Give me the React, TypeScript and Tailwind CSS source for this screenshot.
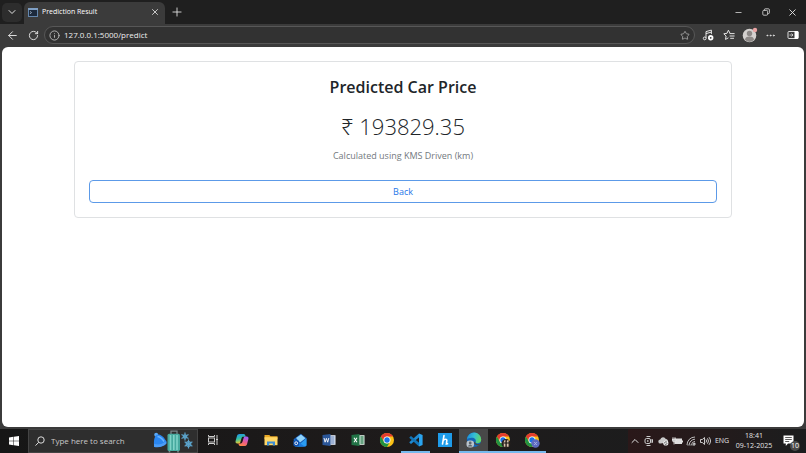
import type { ReactNode } from 'react';
import { ArrowLeft, ChevronDown, ChevronUp, Ellipsis, Info, Minus, Plus, RotateCw, Star, X } from 'lucide-react';

function RestoreIcon() {
  return (
    <svg viewBox="0 0 10 10" className="size-2" fill="none" stroke="currentColor">
      <rect x="1" y="3" width="6" height="6" rx="1.2" />
      <path d="M3 2.8V2a1 1 0 0 1 1-1h4a1.2 1.2 0 0 1 1.2 1.2V6a1 1 0 0 1-1 1h-.8" />
    </svg>
  );
}

function TabIcon() {
  return (
    <svg viewBox="0 0 10 9" className="h-[9px] w-2.5">
      <rect x="0.5" y="0.5" width="9" height="8" fill="#1d2a3c" stroke="#6487ad" />
      <path d="M0 0h10v2H0z" fill="#7f9fc4" />
      <path d="m2 3.4 1.5 1.2L2 5.8" stroke="#c5d8ec" strokeWidth="0.7" fill="none" />
    </svg>
  );
}

function MusicIcon() {
  return (
    <svg viewBox="0 0 12 12" className="size-3" fill="none" stroke="currentColor">
      <path d="M4 9.2V2.6l5.4-1.5v4M4 4.6l5.4-1.5" />
      <circle cx="2.7" cy="9.4" r="1.4" />
      <circle cx="8.7" cy="8.8" r="2.7" fill="#fff" stroke="none" />
      <circle cx="8.7" cy="8.8" r="0.9" fill="#3b3b3b" stroke="none" />
    </svg>
  );
}

function FavoritesIcon() {
  return (
    <svg viewBox="0 0 12 12" className="size-3" fill="none" stroke="currentColor" strokeLinecap="round" strokeLinejoin="round">
      <path d="M7 4.2 5.4 1.2 4 4.3l-3.2.5L3.1 7l-.6 3.4 2.6-1.4M7 4.6h4.2M7 7h4.2M7.6 9.3h3" />
    </svg>
  );
}

function Avatar() {
  return (
    <svg viewBox="0 0 16 16" className="size-4">
      <circle cx="7.5" cy="8.5" r="6.8" fill="#d3d0ce" />
      <circle cx="7.5" cy="6.5" r="2.7" fill="#8c8886" />
      <path d="M3 13.1c0-2.7 1.8-3.6 4.5-3.6s4.5.9 4.5 3.6a6.5 6.5 0 0 1-9 0z" fill="#8c8886" />
      <circle cx="13" cy="3" r="2.2" fill="#e9a3a3" />
    </svg>
  );
}

function SidebarIcon() {
  return (
    <svg viewBox="0 0 12 10" className="h-2.5 w-3">
      <rect x="1" y="1.5" width="10" height="7" rx="1" fill="none" stroke="#ddd" />
      <path d="M7.5 1h2.8A1.2 1.2 0 0 1 11.5 2.2v5.6A1.2 1.2 0 0 1 10.3 9H7.5z" fill="#fff" />
      <path d="M2.5 5H6M4.5 3.5 6 5 4.5 6.5" stroke="#ddd" strokeWidth="0.8" fill="none" />
    </svg>
  );
}

function WindowsIcon() {
  return (
    <svg viewBox="0 0 10 10" className="size-2.5" fill="#fff">
      <path d="M0 1.4 4.4.8v3.9H0zM4.900.7 10 0v4.700H4.900zM0 5.200h4.400v4L0 8.600zM4.900 5.200H10V10l-5.100-.7z" />
    </svg>
  );
}

function SearchIcon() {
  return (
    <svg viewBox="0 0 10 10" className="size-2.5" fill="none" stroke="#ddd">
      <circle cx="6" cy="4" r="3.2" />
      <path d="M3.7 6.3.5 9.6" />
    </svg>
  );
}

function SearchArt() {
  return (
    <svg viewBox="0 0 42 23" className="h-[23px] w-[42px]">
      <circle cx="3.2" cy="4.8" r="2" fill="#5aa8f5" />
      <path d="M1 15C.5 9 2 4.500 5.500 4.500c4 .5 6 4 8 7 .8 1.200-.5 2.500-2 3.500-3 2-7.500 2.300-10.500 2z" fill="#2a86f0" />
      <path d="M4.500 6.500c3 .5 5 2.500 6.500 5" stroke="#69b4ff" strokeWidth="1.500" fill="none" />
      <path d="M1 13.800c4 1.500 8 .7 11.300-2.300l1.200 2c-3 3.300-8 4.500-12.300 3.500z" fill="#4b9cf7" />
      <path d="M18 4V1.200h6V4" stroke="#7a8589" strokeWidth="1.300" fill="none" />
      <rect x="14.500" y="3.800" width="12.500" height="17.200" rx="1.600" fill="#46a99e" />
      <path d="M17.500 5v15M20.800 5v15M24 5v15" stroke="#7fd3c7" strokeWidth="1.600" />
      <path d="M16.500 21v1.500M25 21v1.500" stroke="#7a8589" strokeWidth="1.600" />
      <g stroke="#5ba3cb" strokeWidth="1.200" fill="none">
        <path d="M32 2.500v8M28.500 4.500l7 4M28.500 8.500l7-4" />
        <path d="M35.500 9.500v9M31.600 11.800l7.800 4.500M31.600 16.300l7.800-4.500" />
        <circle cx="35.500" cy="14" r="2.300" />
        <circle cx="32" cy="6.500" r="1.700" />
      </g>
    </svg>
  );
}

function TaskViewIcon() {
  return (
    <svg viewBox="0 0 12 12" className="size-3" fill="none" stroke="#ccc">
      <rect x="1.5" y="4" width="6" height="4" />
      <path d="M1.5 1v1.5h6V1M1.5 11V9.5h6V11M10 1v3M10 7v4" />
      <rect x="9.5" y="5" width="1" height="1" fill="#ddd" />
    </svg>
  );
}

function CopilotIcon() {
  return (
    <svg viewBox="0 0 14 14" className="size-3.5">
      <defs>
        <linearGradient id="copilotLeft" x1="0" y1="0" x2="0.3" y2="1">
          <stop offset="0" stopColor="#1f8df5" />
          <stop offset="0.55" stopColor="#35c2a0" />
          <stop offset="1" stopColor="#f2c62c" />
        </linearGradient>
        <linearGradient id="copilotRight" x1="0.6" y1="0" x2="0.2" y2="1">
          <stop offset="0" stopColor="#a45cf5" />
          <stop offset="0.5" stopColor="#ec5a8c" />
          <stop offset="1" stopColor="#ff8a3d" />
        </linearGradient>
      </defs>
      <path d="M4.6 1h4.2c1 0 1.3.8 1.6 1.7l.4 1H8.3c-1 0-1.4.5-1.7 1.4L5.3 9.2c-.3 1-.8 1.3-1.7 1.3H2.3C.9 10.5.2 9.3.6 8l1.3-4.8C2.3 1.7 3.2 1 4.6 1z" fill="url(#copilotLeft)" />
      <path d="M9.4 13H5.2c-1 0-1.3-.8-1.6-1.7l-.3-.8h2.4c1 0 1.4-.5 1.7-1.4l1.3-4.3c.3-.9.8-1.2 1.7-1.2h1.3c1.4 0 2.1 1.2 1.7 2.5l-1.3 4.8C11.7 12.3 10.8 13 9.4 13z" fill="url(#copilotRight)" />
    </svg>
  );
}

function FolderIcon() {
  return (
    <svg viewBox="0 0 14 12" className="h-3 w-3.5">
      <path d="M.5 1h4.8l1.2 1.3h7v3H.5z" fill="#e9a825" />
      <path d="M.5 3.2h13v8H.5z" fill="#ffd766" />
      <path d="M3 11.5V7.4h8v4.1H8.8V9.6H5.2v1.9z" fill="#3c8ed6" />
    </svg>
  );
}

function OutlookIcon() {
  return (
    <svg viewBox="0 0 14 14" className="size-3.5">
      <path d="M.8 6 7.800.8 13.500 5v7c0 .8-.6 1.400-1.400 1.400H2.500z" fill="#1557b0" />
      <path d="M3 5 8 1.500l4.500 3.700L7 9.500z" fill="#8fd3fb" />
      <path d="M13.500 5.200v6.900c0 .8-.6 1.300-1.400 1.300H4z" fill="#2a9df2" />
      <path d="M.8 6v6c0 .8.600 1.400 1.400 1.400h9.500z" fill="#1a7be0" />
      <rect x="0.5" y="7.500" width="5.500" height="5.500" rx="1" fill="#0f4fae" />
      <circle cx="3.200" cy="10.200" r="1.400" fill="none" stroke="#fff" strokeWidth="0.900" />
    </svg>
  );
}

function WordIcon() {
  return (
    <svg viewBox="0 0 14 12" className="h-3 w-3.5">
      <path d="M7 1.2h6.5v9.6H7z" fill="#e9effa" />
      <path d="M8.5 3h4M8.5 5h4M8.5 7h4M8.5 9h4" stroke="#2b579a" strokeWidth="0.8" />
      <path d="M.5 1 8.5 0v12l-8-1z" fill="#2b579a" />
      <path d="m2 4 1.1 4.2L4.4 4.4l1.3 3.8L6.8 4" stroke="#fff" strokeWidth="0.9" fill="none" />
    </svg>
  );
}

function ExcelIcon() {
  return (
    <svg viewBox="0 0 14 12" className="h-3 w-3.5">
      <path d="M7 1.2h6.5v9.6H7z" fill="#e4f3ea" />
      <path d="M9 3h4M9 5h4M9 7h4M9 9h4M11 2v8" stroke="#217346" strokeWidth="0.8" />
      <path d="M.5 1 8.5 0v12l-8-1z" fill="#217346" />
      <path d="m3 3.8 3 4.4M6 3.8 3 8.2" stroke="#fff" strokeWidth="1.1" />
    </svg>
  );
}

function ChromeIcon({ children }: { children?: ReactNode }) {
  return (
    <svg viewBox="0 0 16 16" className="size-4">
      <circle cx="8" cy="8" r="7" fill="#fbc116" />
      <path d="M1.900 4.500A7 7 0 0 1 14.100 4.500H8A3.500 3.500 0 0 0 5 9.800z" fill="#e33b2e" />
      <path d="M1.900 4.500 5 9.800a3.500 3.500 0 0 0 6 0L8 15A7 7 0 0 1 1.900 4.500z" fill="#229342" />
      <circle cx="8" cy="8" r="3.500" fill="#fff" />
      <circle cx="8" cy="8" r="2.700" fill="#1a73e8" />
      {children}
    </svg>
  );
}

function PersonBadge() {
  return (
    <g>
      <circle cx="11" cy="11.5" r="4.5" fill="#2a211e" />
      <path d="M8.8 14.8V10l.8-2h.8v6.800zM11.800 14.800V9.400l.8-1.400h1v6.800z" fill="#d9c3ae" />
      <path d="M9 11h5" stroke="#15100e" />
    </g>
  );
}

function InitialBadge() {
  return (
    <g>
      <circle cx="11.5" cy="11.500" r="4.200" fill="#5c6bc0" />
      <path d="m10.200 10 2.600 3M12.800 10l-2.600 3" stroke="#aab3e6" strokeWidth="0.9" />
    </g>
  );
}

function CodeIcon() {
  return (
    <svg viewBox="0 0 14 14" className="size-3.5">
      <path d="M10 .4 13.6 2v10L10 13.6z" fill="#2aa4ef" />
      <path d="m10 .4.4 3.6L2 11.1.5 9.8v-.9z" fill="#1f8ad2" />
      <path d="m10 13.6.4-3.6L2 2.9.5 4.2v.9z" fill="#1275b8" />
    </svg>
  );
}

function HandIcon() {
  return (
    <svg viewBox="0 0 14 14" className="size-3.5">
      <rect width="14" height="14" fill="#1e9be9" />
      <path d="M6 2.5 4.5 11M5.2 7.5c1.3-1.6 3.8-1.8 3.6 0L8.4 11l1.2-.3" stroke="#fff" strokeWidth="1.6" fill="none" strokeLinecap="round" />
    </svg>
  );
}

function EdgeIcon() {
  return (
    <svg viewBox="0 0 16 16" className="size-4">
      <defs>
        <linearGradient id="edgeWave" x1="0" y1="0.3" x2="1" y2="0.5">
          <stop offset="0" stopColor="#1c8fdc" />
          <stop offset="0.5" stopColor="#35bfd3" />
          <stop offset="1" stopColor="#63d860" />
        </linearGradient>
      </defs>
      <circle cx="8" cy="7.800" r="7.200" fill="#1566b8" />
      <path d="M1 7.500a7.100 7.100 0 0 1 14.200.3c0 2.300-1.700 3.400-3.700 3.400-1.800 0-2.500-.7-1.900-1.400.8-1.300-.3-4-3.400-4C3.500 5.700 1.700 6.500 1 7.500z" fill="url(#edgeWave)" />
      <path d="M9.300 9.500c-.3 2 1.700 3.200 4.800 2.300l-1 1.200c-2.500.8-5-.5-5.300-2.500z" fill="#484848" />
      <rect x="0.500" y="8.500" width="7.500" height="7" rx="3" fill="#b9c3cb" />
      <circle cx="4.200" cy="11" r="1.400" fill="#5f676d" />
      <path d="M2 14.500c.3-2.300 4-2.300 4.400 0z" fill="#5f676d" />
    </svg>
  );
}

function MeetIcon() {
  return (
    <svg viewBox="0 0 10 12" className="h-3 w-2.5" fill="none" stroke="#ccc">
      <path d="M2.500 1.500h4M2.500 10.500h4" />
      <rect x="1" y="3.500" width="5.500" height="5" rx="1.500" />
      <path d="m6.500 5.500 2-1v3l-2-1" />
      <circle cx="3.800" cy="6" r="0.500" />
    </svg>
  );
}

function CloudIcon() {
  return (
    <svg viewBox="0 0 11 10" className="h-2.5 w-[11px]">
      <path d="M2.500 7.500a2 2 0 0 1-.3-4A3 3 0 0 1 7.800 3a2.400 2.400 0 0 1 2 3.500z" fill="#c9c9c9" />
      <circle cx="7.800" cy="7" r="2.600" fill="#eee" />
      <path d="M6.500 7a1.400 1.400 0 0 1 2.500-.6M9.100 7.300a1.400 1.400 0 0 1-2.500.5" stroke="#222" strokeWidth="0.700" fill="none" />
    </svg>
  );
}

function BatteryIcon() {
  return (
    <svg viewBox="0 0 11 8" className="h-2 w-[11px]">
      <rect x="3" y="2" width="6.500" height="4.500" fill="#ddd" stroke="#ddd" />
      <path d="M10 3.500h1v2h-1z" fill="#ddd" />
      <path d="M1 0v2M3 0v2M0 2h4v1.500L2.500 5H1.500L0 3.500zM2 5v2.500" stroke="#eee" strokeWidth="0.700" fill="#ccc" />
    </svg>
  );
}

function WifiIcon() {
  return (
    <svg viewBox="0 0 10 10" className="size-2.5" fill="none" stroke="#ccc" strokeWidth="0.900">
      <path d="M1 9A8 8 0 0 1 9 1M3.200 9A6 6 0 0 1 9 3.200M5.400 9A4 4 0 0 1 9 5.400" />
      <path d="M7 9a2 2 0 0 1 2-2v2z" fill="#ddd" />
      <path d="M1 9h8" stroke="#888" />
    </svg>
  );
}

function VolumeIcon() {
  return (
    <svg viewBox="0 0 11 10" className="h-2.5 w-[11px]" fill="none" stroke="#ddd" strokeWidth="0.900">
      <path d="M.5 3.500h1.800L4.500 1.500v7L2.300 6.500H.5zM6 3.500a2.500 2.500 0 0 1 0 3M7.500 2.300a4.500 4.500 0 0 1 0 5.400M9 1.200a6 6 0 0 1 0 7.600" />
    </svg>
  );
}

function NotificationIcon() {
  return (
    <svg viewBox="0 0 12 12" className="size-3">
      <path d="M.5.5h10v8H5L2.800 11V8.500H.5z" fill="#fff" />
      <path d="M2.200 2.500h6.600M2.200 4.500h6.600M2.200 6.500h4" stroke="#333" strokeWidth="0.800" />
    </svg>
  );
}

const apps = [
  { name: 'Task View', icon: <TaskViewIcon /> },
  { name: 'Copilot', icon: <CopilotIcon /> },
  { name: 'File Explorer', icon: <FolderIcon /> },
  { name: 'Outlook', icon: <OutlookIcon /> },
  { name: 'Word', icon: <WordIcon /> },
  { name: 'Excel', icon: <ExcelIcon /> },
  { name: 'Chrome', icon: <ChromeIcon /> },
  { name: 'Visual Studio Code', icon: <CodeIcon />, open: true },
  { name: 'Handwriting', icon: <HandIcon /> },
  { name: 'Edge', icon: <EdgeIcon />, open: true, active: true },
  { name: 'Chrome, first profile', icon: <ChromeIcon><PersonBadge /></ChromeIcon>, open: true },
  { name: 'Chrome, second profile', icon: <ChromeIcon><InitialBadge /></ChromeIcon>, open: true },
];

const tray = [
  { name: 'Show hidden icons', icon: <ChevronUp size={12} /> },
  { name: 'Meet Now', icon: <MeetIcon /> },
  { name: 'OneDrive', icon: <CloudIcon /> },
  { name: 'Battery', icon: <BatteryIcon /> },
  { name: 'Network', icon: <WifiIcon /> },
  { name: 'Volume', icon: <VolumeIcon /> },
];

function IconButton({ label, className, children }: { label: string; className: string; children: ReactNode }) {
  return (
    <button type="button" aria-label={label} className={`flex shrink-0 items-center justify-center ${className}`}>
      {children}
    </button>
  );
}

function TabStrip() {
  return (
    <div className="flex h-6 items-center bg-[#1f1f1f] pl-0.5">
      <IconButton label="Tab actions" className="mr-0.5 h-[19px] w-5 rounded-[5px] bg-[#2d2d2d]">
        <ChevronDown size={12} />
      </IconButton>
      <div className="flex h-[22px] w-[141px] items-center gap-1 self-end rounded-t-md bg-[#3b3b3b] px-1 pb-0.5">
        <TabIcon />
        <span className="flex-1 truncate text-[7px] text-white">Prediction Result</span>
        <IconButton label="Close tab" className="size-3">
          <X size={10} />
        </IconButton>
      </div>
      <IconButton label="New tab" className="w-6">
        <Plus size={14} strokeWidth={1.5} />
      </IconButton>
      <div className="ml-auto flex">
        <IconButton label="Minimize" className="w-[27px]">
          <Minus size={9} />
        </IconButton>
        <IconButton label="Restore" className="w-[27px]">
          <RestoreIcon />
        </IconButton>
        <IconButton label="Close" className="w-[27px]">
          <X size={11} />
        </IconButton>
      </div>
    </div>
  );
}

function Toolbar() {
  return (
    <div className="flex h-[23px] items-center bg-[#3b3b3b] pb-px pl-0.5">
      <IconButton label="Back" className="w-5">
        <ArrowLeft size={13} strokeWidth={1.75} />
      </IconButton>
      <IconButton label="Refresh" className="w-[22px]">
        <RotateCw size={11} />
      </IconButton>
      <div className="flex h-[18px] min-w-0 flex-1 items-center gap-1 rounded-full border border-[#575757] bg-[#323232] px-1">
        <Info size={11} className="shrink-0 text-[#bbb]" />
        <input
          type="text"
          aria-label="Address"
          defaultValue="127.0.0.1:5000/predict"
          className="min-w-0 flex-1 bg-transparent text-[8px] text-[#eee] outline-none"
        />
        <IconButton label="Add to favorites" className="w-2.5 text-[#aaa]">
          <Star size={11} />
        </IconButton>
      </div>
      <div className="flex pr-px pl-0.5">
        <IconButton label="Media" className="w-[21px]">
          <MusicIcon />
        </IconButton>
        <IconButton label="Favorites" className="w-[21px]">
          <FavoritesIcon />
        </IconButton>
        <IconButton label="Profile" className="w-[21px]">
          <Avatar />
        </IconButton>
        <IconButton label="Settings and more" className="w-[21px]">
          <Ellipsis size={11} />
        </IconButton>
        <IconButton label="Sidebar" className="w-6">
          <SidebarIcon />
        </IconButton>
      </div>
    </div>
  );
}

function PredictionCard() {
  return (
    <section className="mx-auto w-[82%] rounded border border-[#dfe1e3] p-3.5 text-center text-[#212529]">
      <h1 className="text-[16px] leading-[22px] font-semibold">Predicted Car Price</h1>
      <p className="mt-3 text-[22px] leading-8 font-light">₹ 193829.35</p>
      <p className="mt-1.5 text-[9px] leading-4 text-[#73797e]">Calculated using KMS Driven (km)</p>
      <button
        type="button"
        className="mt-4 h-[23px] w-full rounded-[4px] border border-[#5c9ae8] text-[9px] text-[#2877e8]"
      >
        Back
      </button>
    </section>
  );
}

function Taskbar() {
  return (
    <footer className="flex h-6 bg-linear-to-r from-[#161616] via-[#1e1b1b] to-[#1b1d1e] text-[#e4e4e4]">
      <IconButton label="Start" className="w-7">
        <WindowsIcon />
      </IconButton>
      <div className="flex w-[170px] items-center gap-1.5 border border-[#444] bg-[#2e2e2e] pr-0.5 pl-1.5">
        <SearchIcon />
        <input
          type="search"
          aria-label="Search"
          placeholder="Type here to search"
          className="min-w-0 flex-1 bg-transparent text-[8px] outline-none placeholder:text-[#c8c8c8]"
        />
        <SearchArt />
      </div>
      {apps.map((app) => (
        <button
          key={app.name}
          type="button"
          aria-label={app.name}
          className={`flex w-[29px] items-center justify-center border-b-2 ${app.active ? 'bg-[#484848]' : ''} ${
            app.open ? 'border-[#76b9ed]' : 'border-transparent'
          }`}
        >
          {app.icon}
        </button>
      ))}
      <div className="ml-auto flex bg-linear-to-r from-[#2a1819] to-[#1b1d1e]">
        {tray.map((item) => (
          <IconButton key={item.name} label={item.name} className="w-3.5">
            {item.icon}
          </IconButton>
        ))}
        <button type="button" className="w-5 text-[7px]">ENG</button>
        <button type="button" className="w-11 text-center text-[7px] leading-[10px]">
          <span className="block">18:41</span>
          <span className="block">09-12-2025</span>
        </button>
        <button type="button" aria-label="10 notifications" className="relative flex w-[30px] items-center justify-center pr-1">
          <NotificationIcon />
          <span className="absolute right-1.5 bottom-0.5 flex size-2.5 items-center justify-center rounded-full bg-[#4a4a4a] text-[7px] text-white">
            10
          </span>
        </button>
      </div>
    </footer>
  );
}

export default function App() {
  return (
    <div className="flex h-screen flex-col bg-[#3b3b3b] font-['Open_Sans','Noto_Sans',sans-serif] text-[#e4e4e4]">
      <header>
        <TabStrip />
        <Toolbar />
      </header>
      <main className="mx-0.5 mb-0.5 flex-1 rounded-md bg-white pt-3.5">
        <PredictionCard />
      </main>
      <Taskbar />
    </div>
  );
}
